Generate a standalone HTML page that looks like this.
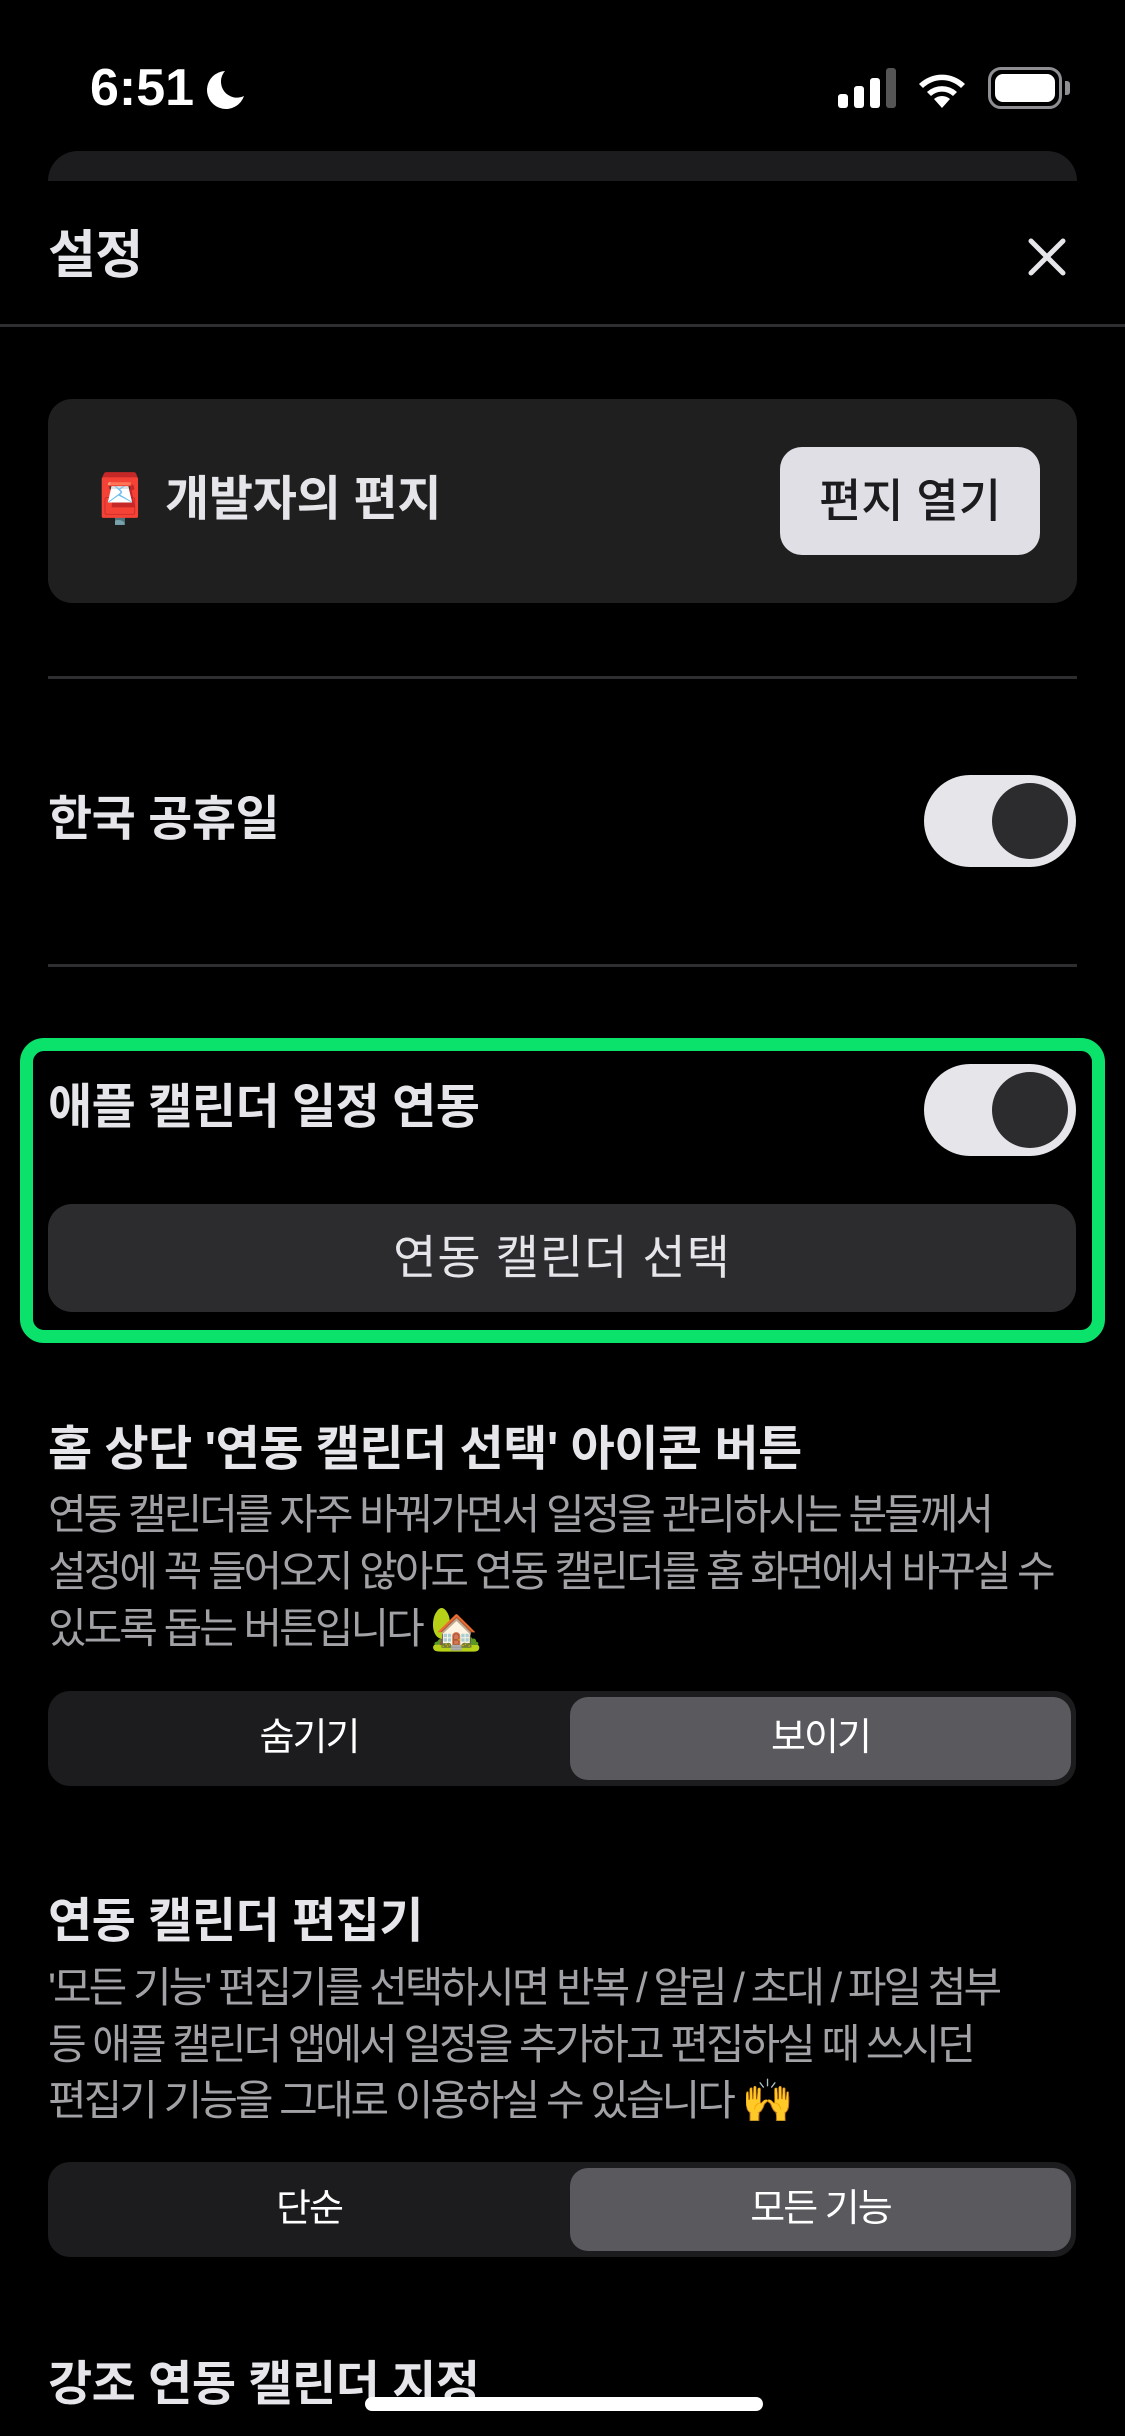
<!DOCTYPE html>
<html><head><meta charset="utf-8"><style>
*{margin:0;padding:0;box-sizing:border-box}
body{width:1125px;height:2436px;background:#000;overflow:hidden;position:relative;font-family:"Liberation Sans","Noto Sans CJK KR",sans-serif;color:#e5e5ea}
.a{position:absolute;white-space:nowrap}
.t{font-size:48px;font-weight:700;letter-spacing:-0.5px;line-height:60px;color:#e5e5ea}
.d{font-size:42px;letter-spacing:-3px;color:#a1a1a6;line-height:56px}
.tog{position:absolute;left:924px;width:152px;height:92px;border-radius:46px;background:#e5e5ea}
.tog::after{content:"";position:absolute;right:8px;top:8px;width:76px;height:76px;border-radius:50%;background:#2c2c2e}
.div{position:absolute;left:48px;width:1029px;height:3px;background:#2e2e30}
.seg{position:absolute;left:48px;width:1028px;height:95px;border-radius:22px;background:#1c1c1e}
.sel{position:absolute;left:522px;top:6px;width:501px;height:83px;border-radius:18px;background:#5a5a5e}
.sl{position:absolute;top:0;height:95px;line-height:95px;font-size:38px;letter-spacing:-2px;color:#fff;text-align:center}
</style></head><body>
<div class="a" style="left:90px;top:58px;font-size:52px;font-weight:700;color:#fff;line-height:60px;letter-spacing:0px">6:51</div>
<svg class="a" style="left:203px;top:68px" width="44" height="44" viewBox="0 0 44 44"><path d="M22 3 A19 19 0 1 0 41 28 A16 16 0 0 1 22 3Z" fill="#fff"/></svg>
<svg class="a" style="left:838px;top:68px" width="62" height="40"><rect x="0" y="26" width="10" height="14" rx="3" fill="#fff"/><rect x="16" y="18" width="10" height="22" rx="3" fill="#fff"/><rect x="32" y="10" width="10" height="30" rx="3" fill="#fff"/><rect x="48" y="0" width="10" height="40" rx="3" fill="#555"/></svg>
<svg class="a" style="left:915px;top:66px" width="54" height="42" viewBox="0 0 54 42"><path d="M27 42 L19 33 A12 12 0 0 1 35 33Z M12 26 A22 22 0 0 1 42 26 L38 30 A16 16 0 0 0 16 30Z M4 18 A33 33 0 0 1 50 18 L46 22 A27 27 0 0 0 8 22Z" fill="#fff"/></svg>
<div class="a" style="left:988px;top:67px;width:74px;height:42px;border:3px solid #8e8e93;border-radius:13px"><div style="position:absolute;left:4px;top:4px;right:4px;bottom:4px;background:#fff;border-radius:8px"></div></div>
<div class="a" style="left:1065px;top:81px;width:5px;height:14px;background:#8e8e93;border-radius:0 3px 3px 0"></div>
<div class="a" style="left:48px;top:151px;width:1029px;height:30px;background:#1c1c1e;border-radius:30px 30px 0 0"></div>
<div class="a t" style="left:48px;top:226px;font-size:52px">설정</div>
<svg class="a" style="left:1028px;top:238px" width="38" height="38"><path d="M3 3L35 35M35 3L3 35" stroke="#e5e5ea" stroke-width="5" stroke-linecap="round"/></svg>
<div class="div" style="top:324px;left:0;width:1125px"></div>
<div class="a" style="left:48px;top:399px;width:1029px;height:204px;background:#1f1f1f;border-radius:24px"></div>
<div class="a" style="left:90px;top:470px;font-size:48px;line-height:60px">📮</div>
<div class="a t" style="left:165px;top:470px;font-weight:600;letter-spacing:-0.3px">개발자의 편지</div>
<div class="a" style="left:780px;top:447px;width:260px;height:108px;background:#e0dfe5;border-radius:22px;color:#1c1c1e;font-size:46px;font-weight:500;letter-spacing:0px;line-height:108px;text-align:center">편지 열기</div>
<div class="div" style="top:676px"></div>
<div class="a t" style="left:48px;top:790px">한국 공휴일</div>
<div class="tog" style="top:775px"></div>
<div class="div" style="top:964px"></div>
<div class="a" style="left:20px;top:1038px;width:1085px;height:305px;border:13px solid #0be26b;border-radius:24px"></div>
<div class="a t" style="left:48px;top:1078px">애플 캘린더 일정 연동</div>
<div class="tog" style="top:1064px"></div>
<div class="a" style="left:48px;top:1204px;width:1028px;height:108px;background:#2c2c2e;border-radius:24px;text-align:center;line-height:108px;font-size:47px;letter-spacing:1px;color:#e5e5ea">연동 캘린더 선택</div>
<div class="a t" style="left:48px;top:1420px">홈 상단 '연동 캘린더 선택' 아이콘 버튼</div>
<div class="a d" style="left:48px;top:1487px">연동 캘린더를 자주 바꿔가면서 일정을 관리하시는 분들께서</div>
<div class="a d" style="left:48px;top:1544px">설정에 꼭 들어오지 않아도 연동 캘린더를 홈 화면에서 바꾸실 수</div>
<div class="a d" style="left:48px;top:1601px">있도록 돕는 버튼입니다 🏡</div>
<div class="seg" style="top:1691px"><div class="sel"></div><div class="sl" style="left:0;width:522px">숨기기</div><div class="sl" style="left:522px;width:501px">보이기</div></div>
<div class="a t" style="left:48px;top:1892px">연동 캘린더 편집기</div>
<div class="a d" style="left:48px;top:1960px">'모든 기능' 편집기를 선택하시면 반복 / 알림 / 초대 / 파일 첨부</div>
<div class="a d" style="left:48px;top:2017px">등 애플 캘린더 앱에서 일정을 추가하고 편집하실 때 쓰시던</div>
<div class="a d" style="left:48px;top:2073px">편집기 기능을 그대로 이용하실 수 있습니다 🙌</div>
<div class="seg" style="top:2162px"><div class="sel"></div><div class="sl" style="left:0;width:522px">단순</div><div class="sl" style="left:522px;width:501px">모든 기능</div></div>
<div class="a t" style="left:48px;top:2355px">강조 연동 캘린더 지정</div>
<div class="a" style="left:365px;top:2397px;width:398px;height:14px;background:#fff;border-radius:7px"></div>
</body></html>
